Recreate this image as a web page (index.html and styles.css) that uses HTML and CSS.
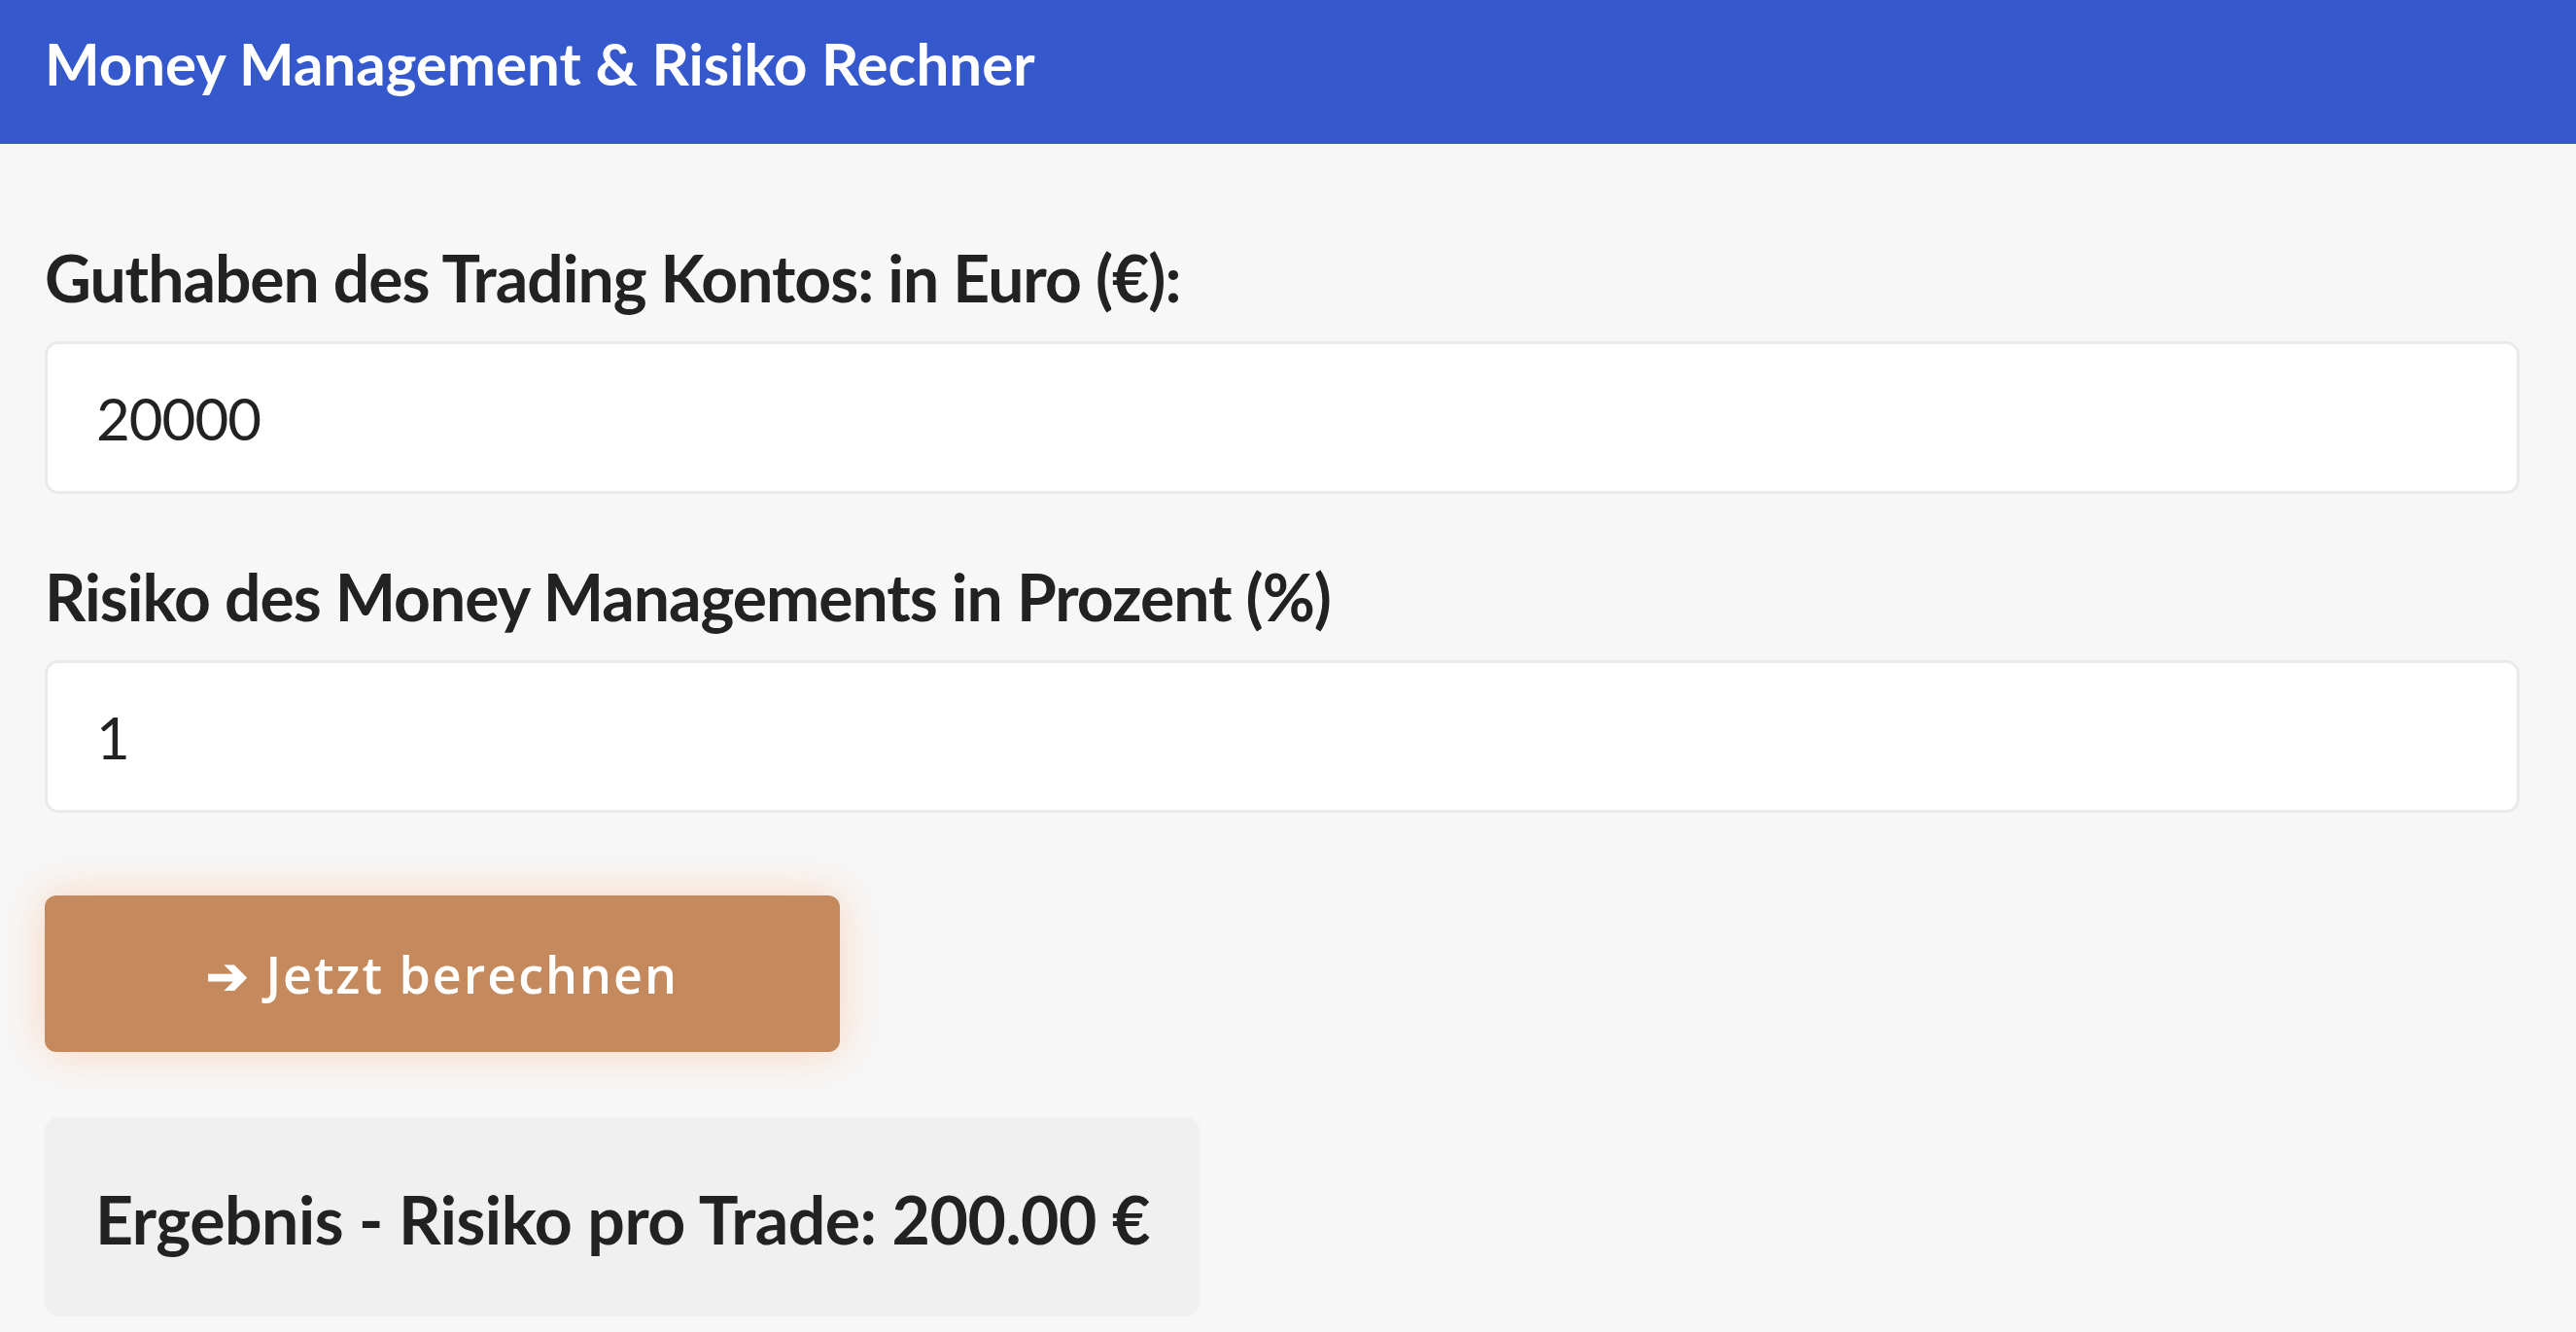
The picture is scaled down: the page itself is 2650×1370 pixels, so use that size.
FILE: index.html
```html
<!DOCTYPE html>
<html lang="de">
<head>
    <meta charset="UTF-8">
    <meta name="viewport" content="width=device-width, initial-scale=1.0">
    <title>Money Management &amp; Risiko Rechner</title>
    <link rel="stylesheet" href="styles.css">
</head>
<body>
    <header class="topbar">
        <h1>Money Management &amp; Risiko Rechner</h1>
    </header>

    <main class="calc">
        <!-- Eingaben -->
        <label for="balance">Guthaben des Trading Kontos: in Euro (€):</label>
        <input type="number" id="balance" value="20000">

        <label for="risk">Risiko des Money Managements in Prozent (%)</label>
        <input type="number" id="risk" value="1">

        <button id="calcBtn" class="calc-btn">➔ Jetzt berechnen</button>

        <!-- Ergebnis -->
        <div class="result" id="result">Ergebnis - Risiko pro Trade: 200.00 €</div>
    </main>

    <script>
        document.getElementById('calcBtn').addEventListener('click', () => {
            const balance = parseFloat(document.getElementById('balance').value) || 0;
            const risk = parseFloat(document.getElementById('risk').value) || 0;
            const amount = balance * risk / 100;
            document.getElementById('result').textContent = `Ergebnis - Risiko pro Trade: ${amount.toFixed(2)} €`;
        });
    </script>
</body>
</html>
```

FILE: styles.css
```css
body {
    margin: 0;
    font-family: Lato, "Open Sans", sans-serif;
    background-color: #f7f7f7;
    color: #222;
}
.topbar {
    box-sizing: border-box;
    height: 148px;
    padding: 29px 46px 0;
    background-color: #3558cc;
}
.topbar h1 {
    margin: 0;
    font-size: 60px;
    font-weight: 700;
    line-height: 72px;
    color: #fff;
}
.calc {
    display: flex;
    flex-direction: column;
    align-items: flex-start;
    padding: 98px 58px 20px 46px;
}
label {
    display: block;
    font-size: 66px;
    font-weight: 700;
    line-height: 79px;
    letter-spacing: -1px;
    margin-bottom: 26px;
}
input {
    box-sizing: border-box;
    width: 100%;
    height: 157px;
    padding: 0 50px;
    margin-bottom: 66px;
    font-family: Lato, sans-serif;
    font-size: 60px;
    letter-spacing: -1px;
    color: #222;
    background-color: #fff;
    border: 3px solid #eaeaea;
    border-radius: 14px;
    outline: none;
}
input::-webkit-outer-spin-button,
input::-webkit-inner-spin-button {
    -webkit-appearance: none;
    margin: 0;
}
.calc input:last-of-type {
    margin-bottom: 85px;
}
.calc-btn {
    width: 818px;
    height: 161px;
    font-family: "Open Sans", sans-serif;
    font-size: 52px;
    font-weight: 600;
    letter-spacing: 2px;
    color: #fff;
    background-color: #c48a5e;
    border: none;
    border-radius: 12px;
    box-shadow: 0 0 44px rgba(255, 160, 100, 0.4);
    cursor: pointer;
    margin-bottom: 67px;
}
.calc-btn:hover {
    background-color: #b57a4e;
}
.result {
    box-sizing: border-box;
    height: 205px;
    padding: 64px 51px 0 52px;
    font-size: 68px;
    font-weight: 700;
    line-height: 82px;
    letter-spacing: -0.5px;
    background-color: #f0f0f0;
    border-radius: 14px;
}
```
